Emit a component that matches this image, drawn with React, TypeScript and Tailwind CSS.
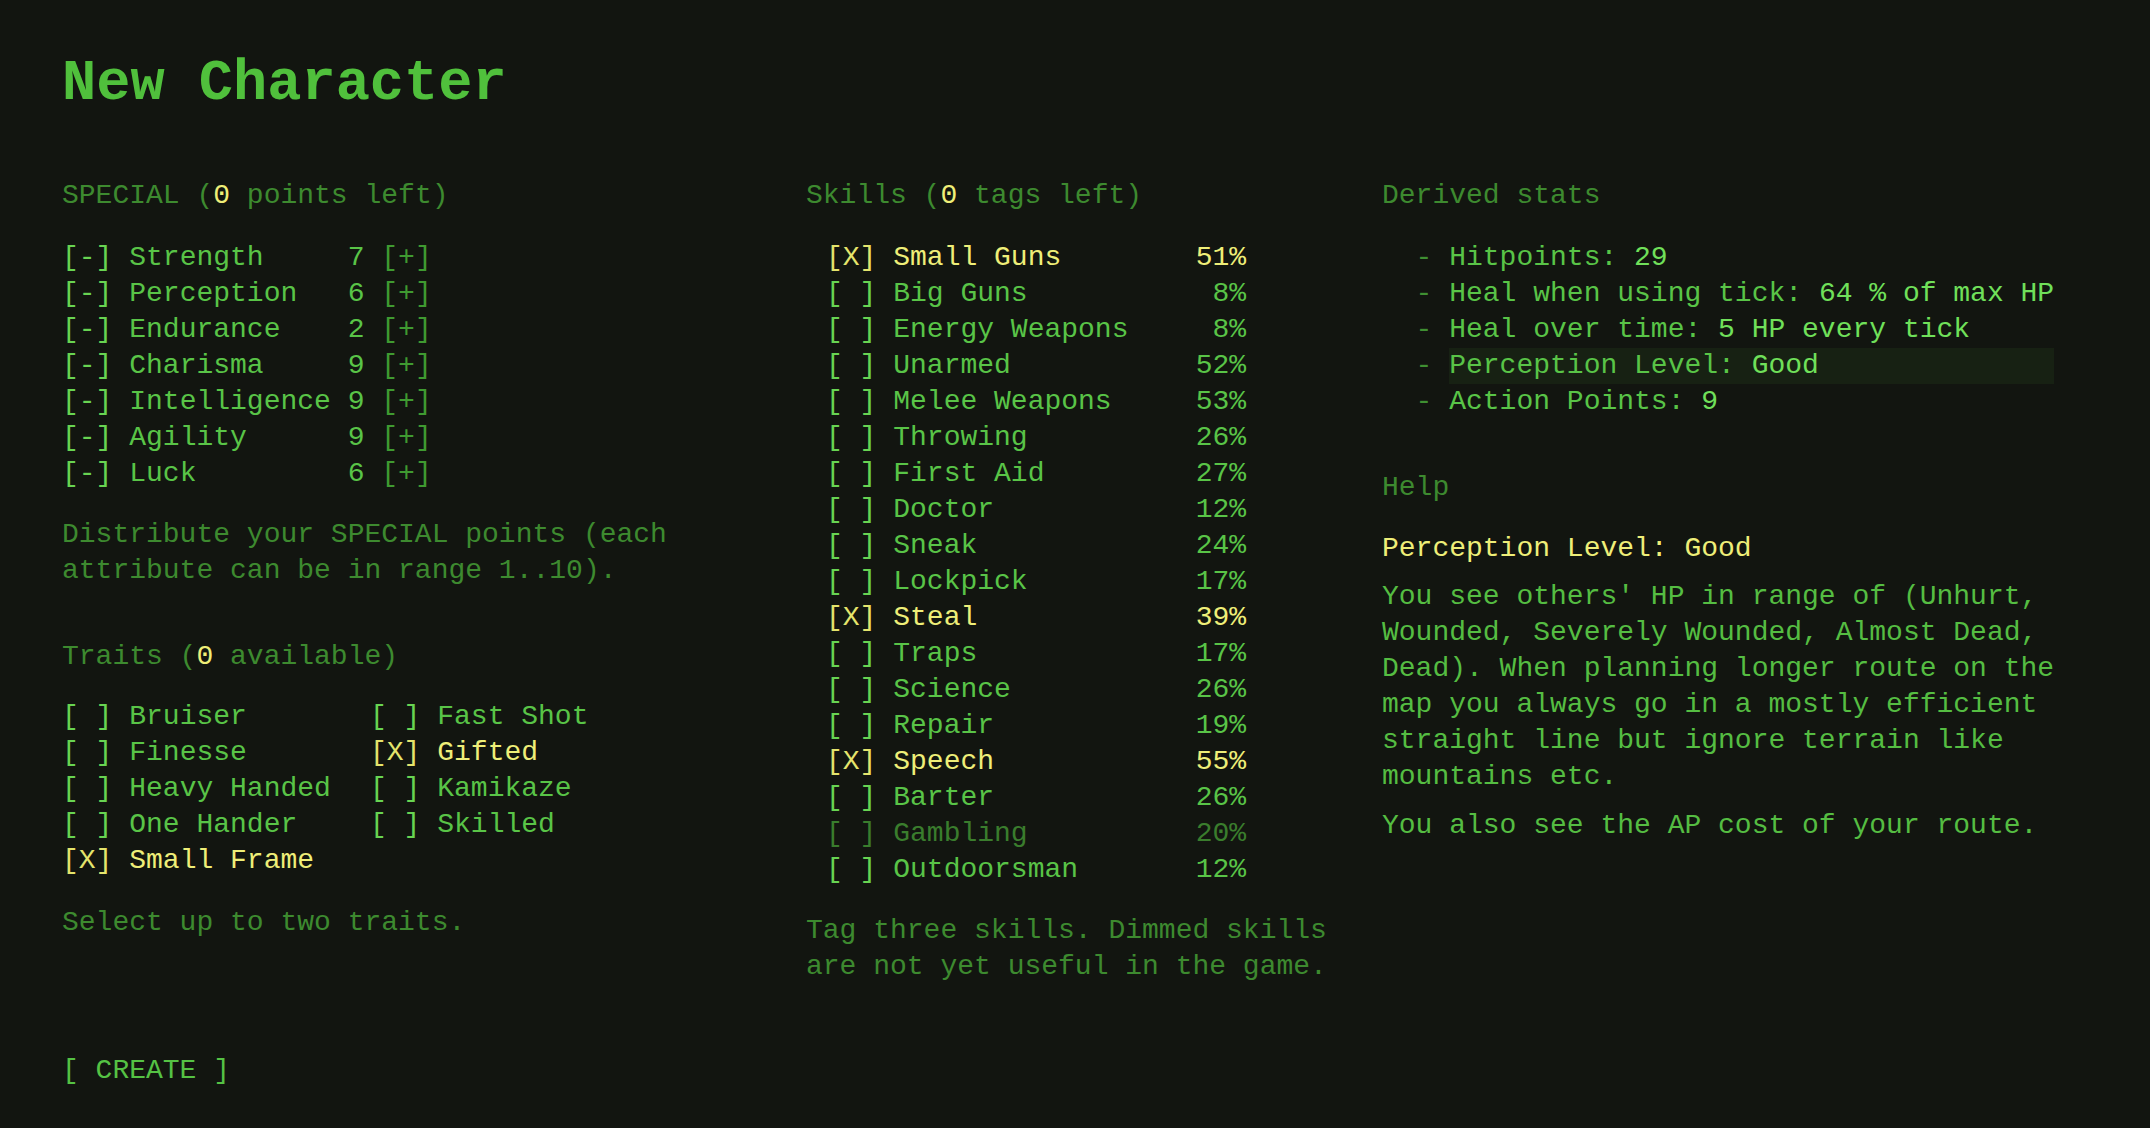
const special: [string, number][] = [
  ["Strength", 7],
  ["Perception", 6],
  ["Endurance", 2],
  ["Charisma", 9],
  ["Intelligence", 9],
  ["Agility", 9],
  ["Luck", 6],
];

const traits: [string, boolean][] = [
  ["Bruiser", false],
  ["Fast Shot", false],
  ["Finesse", false],
  ["Gifted", true],
  ["Heavy Handed", false],
  ["Kamikaze", false],
  ["One Hander", false],
  ["Skilled", false],
  ["Small Frame", true],
];

const skills: { name: string; pct: number; tag?: boolean; dim?: boolean }[] = [
  { name: "Small Guns", pct: 51, tag: true },
  { name: "Big Guns", pct: 8 },
  { name: "Energy Weapons", pct: 8 },
  { name: "Unarmed", pct: 52 },
  { name: "Melee Weapons", pct: 53 },
  { name: "Throwing", pct: 26 },
  { name: "First Aid", pct: 27 },
  { name: "Doctor", pct: 12 },
  { name: "Sneak", pct: 24 },
  { name: "Lockpick", pct: 17 },
  { name: "Steal", pct: 39, tag: true },
  { name: "Traps", pct: 17 },
  { name: "Science", pct: 26 },
  { name: "Repair", pct: 19 },
  { name: "Speech", pct: 55, tag: true },
  { name: "Barter", pct: 26 },
  { name: "Gambling", pct: 20, dim: true },
  { name: "Outdoorsman", pct: 12 },
];

const derived: { label: string; value: string; active?: boolean }[] = [
  { label: "Hitpoints: ", value: "29" },
  { label: "Heal when using tick: ", value: "64 % of max HP" },
  { label: "Heal over time: ", value: "5 HP every tick" },
  { label: "Perception Level: ", value: "Good", active: true },
  { label: "Action Points: ", value: "9" },
];

const Heading = ({ children }: { children: React.ReactNode }) => (
  <h2 className="text-[#3d8a2f]">{children}</h2>
);

const Zero = () => <span className="text-[#eeee78]">0</span>;

export default function App() {
  return (
    <div className="min-h-[1128px] bg-[#121510] px-[62px] font-['Liberation_Mono',monospace] text-[28px] leading-[36px] text-[#59c447] whitespace-pre">
      <h1 className="pt-[50px] text-[57px] leading-[68px] font-bold text-[#50c03c]">
        New Character
      </h1>

      <div className="mt-[60px] grid grid-cols-[744px_576px_1fr]">
        {/* SPECIAL + traits */}
        <div>
          <Heading>
            SPECIAL (<Zero /> points left)
          </Heading>
          <div className="mt-[26px]">
            {special.map(([name, v]) => (
              <div key={name}>
                <span className="text-[#68d452]">[-]</span> {name.padEnd(12)} {v}{" "}
                <span className="text-[#3f9a31]">[+]</span>
              </div>
            ))}
          </div>
          <p className="mt-[25px] text-[#3d8a2f] whitespace-normal">
            Distribute your SPECIAL points (each attribute can be in range 1..10).
          </p>

          <div className="mt-[50px]">
            <Heading>
              Traits (<Zero /> available)
            </Heading>
            <div className="mt-[24px] grid grid-cols-[308px_1fr]">
              {traits.map(([name, on]) => (
                <div key={name} className={on ? "text-[#eeee78]" : ""}>
                  <span className={on ? "text-[#e4e46c]" : "text-[#68d452]"}>
                    {on ? "[X]" : "[ ]"}
                  </span>{" "}
                  {name}
                </div>
              ))}
            </div>
          </div>
          <p className="mt-[26px] text-[#3d8a2f]">Select up to two traits.</p>
        </div>

        {/* Skills */}
        <div>
          <Heading>
            Skills (<Zero /> tags left)
          </Heading>
          <div className="mt-[26px] pl-[20px]">
            {skills.map((s) => (
              <div
                key={s.name}
                className={
                  s.tag ? "text-[#eeee78]" : s.dim ? "text-[#3a7d2d]" : ""
                }
              >
                <span
                  className={
                    s.tag
                      ? "text-[#e4e46c]"
                      : s.dim
                        ? "text-[#3a7d2d]"
                        : "text-[#68d452]"
                  }
                >
                  {s.tag ? "[X]" : "[ ]"}
                </span>{" "}
                {s.name.padEnd(17)}
                {(s.pct + "%").padStart(4)}
              </div>
            ))}
          </div>
          <p className="mt-[25px] text-[#3d8a2f] whitespace-normal">
            Tag three skills. Dimmed skills are not yet useful in the game.
          </p>
        </div>

        {/* Derived + help */}
        <div>
          <Heading>Derived stats</Heading>
          <ul className="mt-[26px] pl-[2ch]">
            {derived.map((d) => (
              <li key={d.label} className="flex">
                <span className="text-[#3f8f32]">- </span>
                <span className={`w-[36ch] ${d.active ? "bg-[#172113]" : ""}`}>
                  {d.label}
                  <span className="text-[#70e05a]">{d.value}</span>
                </span>
              </li>
            ))}
          </ul>

          <div className="mt-[50px]">
            <Heading>Help</Heading>
            <h3 className="mt-[25px] text-[#eeee78]">Perception Level: Good</h3>
            <p className="mt-[12px] text-[#55bd42] whitespace-normal">
              You see others' HP in range of (Unhurt, Wounded, Severely Wounded,
              Almost Dead, Dead). When planning longer route on the map you always
              go in a mostly efficient straight line but ignore terrain like
              mountains etc.
            </p>
            <p className="mt-[13px] text-[#55bd42] whitespace-normal">
              You also see the AP cost of your route.
            </p>
          </div>
        </div>
      </div>

      <button className="mt-[68px] text-[#55c244]">[ CREATE ]</button>
    </div>
  );
}
